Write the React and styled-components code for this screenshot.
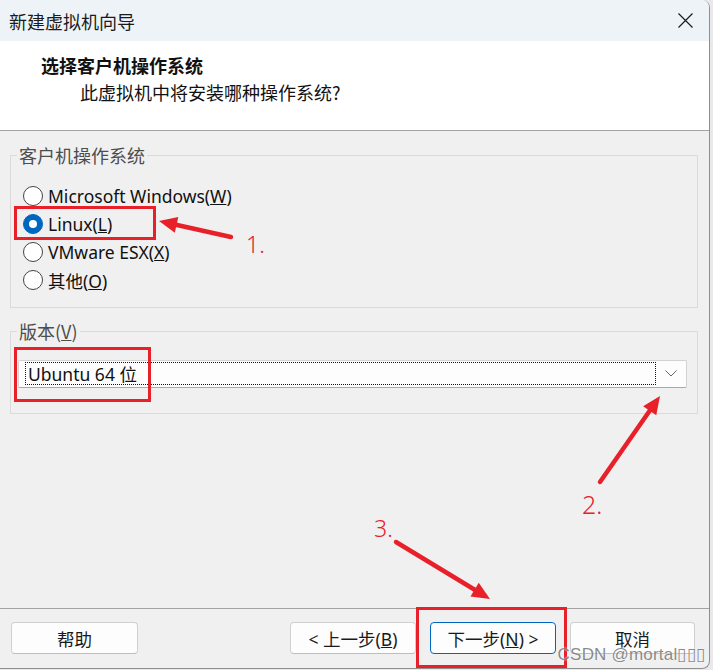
import React from 'react'
import styled, { createGlobalStyle } from 'styled-components'

const GlobalStyle = createGlobalStyle`
    html, body {
        margin: 0;
        padding: 0;
        background: #e9e9ec;
    }
    * {
        box-sizing: border-box;
    }
`

const RED = '#e8202a'
const UI_FONT = `"Noto Sans", "Noto Sans CJK SC", sans-serif`
const CJK_FONT = `"Noto Sans CJK SC", "Noto Sans", sans-serif`

const Page = styled.div`
    width: 713px;
    height: 670px;
    overflow: hidden;
`

const Window = styled.div`
    position: relative;
    width: 710px;
    height: 669px;
    display: flex;
    flex-direction: column;
    background: #f0f0f0;
    border-right: 1px solid #8f8f8f;
    border-bottom: 1px solid #8f8f8f;
    border-radius: 0 8px 8px 0;
    overflow: hidden;
    font-family: ${UI_FONT};
    color: #111;
`

const TitleBar = styled.div`
    height: 41px;
    flex: none;
    display: flex;
    align-items: center;
    justify-content: space-between;
    padding: 0 16px 0 9px;
    background: #eef3f7;
`

const Title = styled.span`
    font-family: ${CJK_FONT};
    font-size: 18px;
    color: #1b1b1b;
`

const CloseIcon = styled.svg`
    width: 15px;
    height: 15px;
    display: block;
`

const Header = styled.div`
    height: 90px;
    flex: none;
    background: #fff;
    border-bottom: 1px solid #a3a3a3;
    padding: 11px 0 0 41px;
`

const HeaderTitle = styled.div`
    font-family: ${CJK_FONT};
    font-size: 18px;
    font-weight: 700;
    line-height: 26px;
`

const HeaderSub = styled.div`
    font-family: ${CJK_FONT};
    font-size: 18px;
    line-height: 26px;
    padding-left: 39px;
    margin-top: 1px;
`

const Body = styled.div`
    flex: 1;
    padding: 13px 11px 0 10px;
    display: flex;
    flex-direction: column;
    gap: 12px;
`

// legend sits at the fieldset's padding edge, so keep that small and
// indent the content itself
const Group = styled.fieldset`
    margin: 0;
    padding: ${p => p.$pad};
    border: 1px solid #dadada;
    min-width: 0;
`

const Legend = styled.legend`
    margin-left: 0;
    padding: 0 2px;
    font-family: ${CJK_FONT};
    font-size: 18px;
    line-height: 22px;
    color: #4d4d4d;
`

const GroupContent = styled.div`
    padding-left: ${p => p.$indent}px;
`

const RadioRow = styled.label`
    height: 28px;
    display: flex;
    align-items: center;
    gap: 5px;
    font-size: 17.5px;
`

const RadioDot = styled.span`
    width: 20px;
    height: 20px;
    flex: none;
    border-radius: 50%;
    border: 1px solid ${p => (p.$checked ? '#0067c0' : '#444')};
    background: ${p => (p.$checked ? '#0067c0' : '#fff')};
    display: flex;
    align-items: center;
    justify-content: center;

    &::after {
        content: '';
        width: 8px;
        height: 8px;
        border-radius: 50%;
        background: #fff;
        display: ${p => (p.$checked ? 'block' : 'none')};
    }
`

const Combo = styled.div`
    height: 28px;
    display: flex;
    align-items: stretch;
    background: #fdfdfd;
    border: 1px solid #d2d2d2;
    border-bottom-color: #a8a8a8;
    border-radius: 2px;
    padding: 1px 0 2px 6px;
`

const ComboValue = styled.div`
    flex: 1;
    border: 1px dotted #111;
    display: flex;
    align-items: center;
    padding-left: 2px;
    font-size: 17.5px;
`

const ComboArrow = styled.div`
    width: 30px;
    display: flex;
    align-items: center;
    justify-content: center;
`

const Footer = styled.div`
    height: 60px;
    flex: none;
    border-top: 1px solid #a3a3a3;
    padding: 13px 14px 0 11px;
    display: flex;
    justify-content: space-between;
    align-items: flex-start;
`

const ButtonGroup = styled.div`
    display: flex;
    gap: 14px;
`

const Button = styled.button`
    width: ${p => p.$w || 126}px;
    height: 32px;
    margin: 0;
    padding: 0;
    border-radius: 4px;
    border: 1px solid ${p => (p.$primary ? '#0067c0' : '#d0d0d0')};
    border-bottom-color: ${p => (p.$primary ? '#0067c0' : '#bdbdbd')};
    background: #fdfdfd;
    font-family: ${UI_FONT};
    font-size: 17.5px;
    color: #1a1a1a;
`

const Overlay = styled.svg`
    position: absolute;
    left: 0;
    top: 0;
    width: 710px;
    height: 670px;
    pointer-events: none;
`

const Watermark = styled.div`
    position: absolute;
    right: 4px;
    bottom: 3px;
    font-family: "Liberation Sans", sans-serif;
    font-size: 17px;
    color: rgba(100, 100, 100, 0.75);
    text-shadow: 0 0 2px #fff;
    letter-spacing: 0.2px;
`

const arrowParts = (sx, sy, tx, ty, len = 18, half = 8) => {
    const dx = tx - sx
    const dy = ty - sy
    const d = Math.hypot(dx, dy)
    const ux = dx / d
    const uy = dy / d
    const bx = tx - ux * len
    const by = ty - uy * len
    const nx = -uy
    const ny = ux
    return {
        line: [sx, sy, bx + ux * 3, by + uy * 3],
        head: `${tx},${ty} ${bx + nx * half},${by + ny * half} ${bx - nx * half},${by - ny * half}`,
    }
}

const Arrow = ({ from, to }) => {
    const a = arrowParts(from[0], from[1], to[0], to[1])
    return (
        <g>
            <line
                x1={a.line[0]}
                y1={a.line[1]}
                x2={a.line[2]}
                y2={a.line[3]}
                stroke={RED}
                strokeWidth="4.5"
                strokeLinecap="round"
            />
            <polygon points={a.head} fill={RED} />
        </g>
    )
}

const options = [
    { label: 'Microsoft Windows', key: 'W' },
    { label: 'Linux', key: 'L', checked: true },
    { label: 'VMware ESX', key: 'X' },
    { label: '其他', key: 'O' },
]

const App = () => {
    return (
        <Page>
            <GlobalStyle />
            <Window>
                <TitleBar>
                    <Title>新建虚拟机向导</Title>
                    <CloseIcon viewBox="0 0 15 15">
                        <path d="M0.5 0.5L14.5 14.5M14.5 0.5L0.5 14.5" stroke="#1b1b1b" strokeWidth="1.2" />
                    </CloseIcon>
                </TitleBar>

                <Header>
                    <HeaderTitle>选择客户机操作系统</HeaderTitle>
                    <HeaderSub>此虚拟机中将安装哪种操作系统?</HeaderSub>
                </Header>

                <Body>
                    <Group $pad="16px 12px 13px 6px">
                        <Legend>客户机操作系统</Legend>
                        <GroupContent $indent={6}>
                            {options.map(o => (
                                <RadioRow key={o.key}>
                                    <RadioDot $checked={o.checked} />
                                    <span>
                                        {o.label}(<u>{o.key}</u>)
                                    </span>
                                </RadioRow>
                            ))}
                        </GroupContent>
                    </Group>

                    <Group $pad="18px 10px 25px 6px">
                        <Legend>
                            版本(<u>V</u>)
                        </Legend>
                        <GroupContent $indent={1}>
                            <Combo>
                                <ComboValue>Ubuntu 64 位</ComboValue>
                                <ComboArrow>
                                    <svg width="12" height="7" viewBox="0 0 12 7">
                                        <path d="M0.5 0.5L6 6L11.5 0.5" fill="none" stroke="#666" strokeWidth="1" />
                                    </svg>
                                </ComboArrow>
                            </Combo>
                        </GroupContent>
                    </Group>
                </Body>

                <Footer>
                    <Button $w={127}>帮助</Button>
                    <ButtonGroup>
                        <Button>
                            &lt; 上一步(<u>B</u>)
                        </Button>
                        <Button $primary>
                            下一步(<u>N</u>) &gt;
                        </Button>
                        <Button $w={125}>取消</Button>
                    </ButtonGroup>
                </Footer>

                <Overlay viewBox="0 0 710 670">
                    <rect x="15.5" y="207.5" width="139" height="31" fill="none" stroke={RED} strokeWidth="3" />
                    <rect x="15.5" y="348.5" width="134" height="52" fill="none" stroke={RED} strokeWidth="3" />
                    <rect x="417.5" y="608.5" width="148" height="58" fill="none" stroke={RED} strokeWidth="3" />
                    <Arrow from={[231, 237]} to={[159, 221]} />
                    <Arrow from={[600, 482]} to={[660, 396]} />
                    <Arrow from={[396, 542]} to={[490, 599]} />
                    <text x="246" y="253" fill={RED} fontSize="23" fontFamily="Noto Sans, sans-serif" fontWeight="300">1.</text>
                    <text x="582" y="514" fill={RED} fontSize="25" fontFamily="Noto Sans, sans-serif" fontWeight="300">2.</text>
                    <text x="374" y="537" fill={RED} fontSize="23" fontFamily="Noto Sans, sans-serif" fontWeight="300">3.</text>
                </Overlay>

                <Watermark>CSDN @mortal▯▯▯</Watermark>
            </Window>
        </Page>
    )
}

export default App
